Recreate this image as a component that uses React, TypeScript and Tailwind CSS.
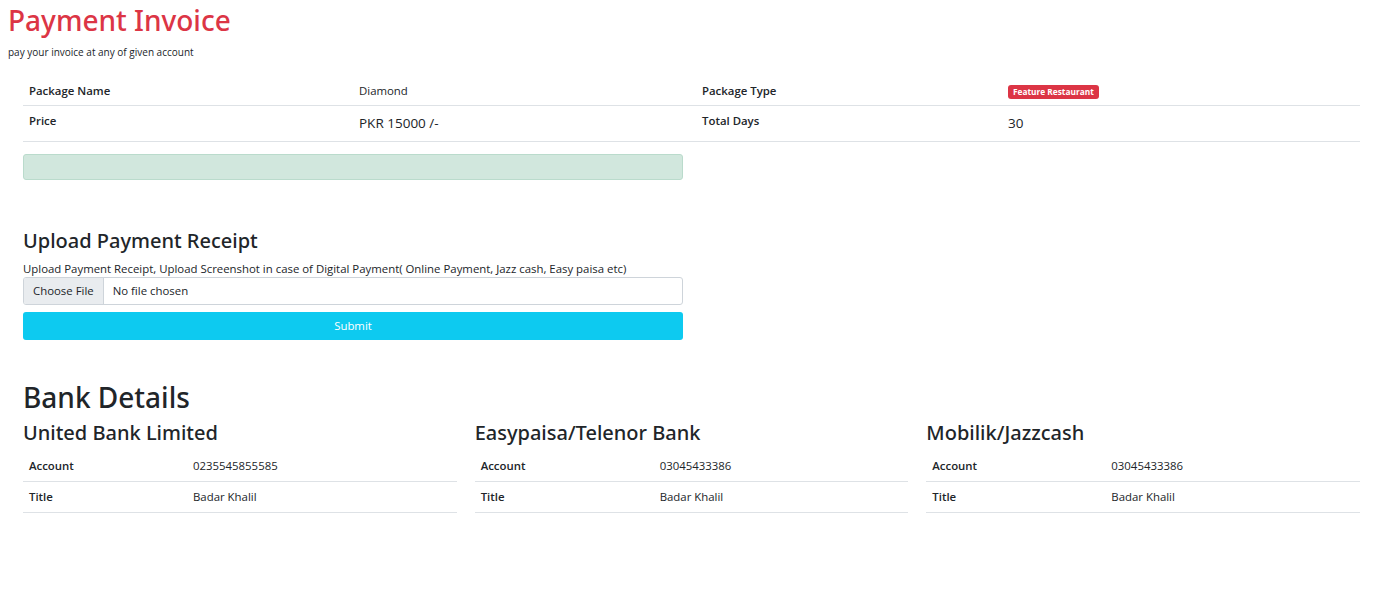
import React from 'react'

const banks = [
  { name: 'United Bank Limited', account: '0235545855585', title: 'Badar Khalil', labelW: 'w-[164px]' },
  { name: 'Easypaisa/Telenor Bank', account: '03045433386', title: 'Badar Khalil', labelW: 'w-[179px]' },
  { name: 'Mobilik/Jazzcash', account: '03045433386', title: 'Badar Khalil', labelW: 'w-[179px]' },
]

const App = () => {
  return (
    <div className="min-h-screen bg-white font-['Open_Sans',sans-serif] text-[#212529]">
      {/* header */}
      <div className="px-[8px] pt-[2px]">
        <h1 className="font-['Noto_Sans',sans-serif] text-[28px] font-medium leading-[36px] text-[#dc3545]">Payment Invoice</h1>
        <p className="mt-[7px] text-[10px] leading-[14px]">pay your invoice at any of given account</p>
      </div>

      <div className="pl-[23px] pr-[25px]">
        {/* package table */}
        <table className="mt-[17px] w-full border-collapse text-[11.4px]">
          <tbody>
            <tr className="h-[29px] border-b border-[#dee2e6]">
              <th className="w-[330px] px-[6px] text-left font-semibold">Package Name</th>
              <td className="w-[343px] px-[6px]">Diamond</td>
              <th className="w-[306px] px-[6px] text-left font-semibold">Package Type</th>
              <td className="px-[6px]">
                <span className="inline-block rounded-[3px] bg-[#dc3545] px-[5px] text-[8.3px] font-bold leading-[14px] text-white">
                  Feature Restaurant
                </span>
              </td>
            </tr>
            <tr className="h-[36px] border-b border-[#dee2e6]">
              <th className="px-[6px] pb-[4px] text-left font-semibold">Price</th>
              <td className="px-[6px] text-[13.5px]">PKR 15000 /-</td>
              <th className="px-[6px] pb-[4px] text-left font-semibold">Total Days</th>
              <td className="px-[6px] text-[13.5px]">30</td>
            </tr>
          </tbody>
        </table>

        <div className="mt-[12px] h-[26px] w-[660px] rounded-[3px] border border-[#badbcc] bg-[#d1e7dd]" />

        {/* upload */}
        <div className="mt-[48px] w-[660px]">
          <h2 className="font-['Noto_Sans',sans-serif] text-[20px] font-medium leading-[26px]">Upload Payment Receipt</h2>
          <p className="mt-[7px] text-[11.4px] leading-[16px]">
            Upload Payment Receipt, Upload Screenshot in case of Digital Payment( Online Payment, Jazz cash, Easy paisa etc)
          </p>
          <div className="flex h-[28px] overflow-hidden rounded-[3px] border border-[#ced4da] text-[11.4px]">
            <div className="flex items-center border-r border-[#ced4da] bg-[#e9ecef] px-[9px]">Choose File</div>
            <div className="flex items-center px-[9px]">No file chosen</div>
          </div>
          <button className="mt-[7px] h-[28px] w-full rounded-[3px] bg-[#0dcaf0] text-[11.4px] text-white">Submit</button>
        </div>

        {/* bank details */}
        <h2 className="mt-[39px] font-['Noto_Sans',sans-serif] text-[28px] font-medium leading-[36px]">Bank Details</h2>
        <div className="mt-[5px] grid grid-cols-3 gap-[18px]">
          {banks.map((b) => (
            <div key={b.name}>
              <h3 className="font-['Noto_Sans',sans-serif] text-[20px] font-medium leading-[26px]">{b.name}</h3>
              <table className="mt-[5px] w-full border-collapse text-[11.4px]">
                <tbody>
                  <tr className="h-[31px] border-b border-[#dee2e6]">
                    <th className={`${b.labelW} px-[6px] text-left font-semibold`}>Account</th>
                    <td className="px-[6px]">{b.account}</td>
                  </tr>
                  <tr className="h-[31px] border-b border-[#dee2e6]">
                    <th className="px-[6px] text-left font-semibold">Title</th>
                    <td className="px-[6px]">{b.title}</td>
                  </tr>
                </tbody>
              </table>
            </div>
          ))}
        </div>
      </div>
    </div>
  )
}

export default App
